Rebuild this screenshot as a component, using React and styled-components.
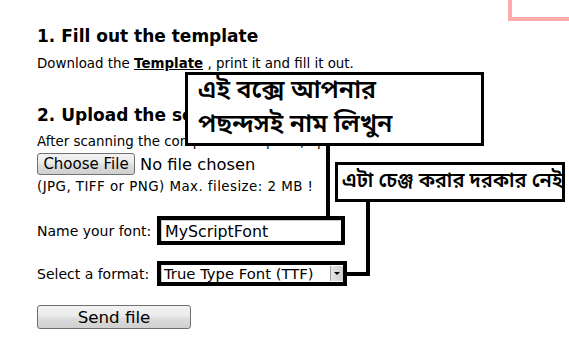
import React from "react";
import styled, { createGlobalStyle } from "styled-components";

const Global = createGlobalStyle`
  html, body { margin: 0; padding: 0; background: #fff; }
  body { font-family: "DejaVu Sans", Verdana, sans-serif; color: #000; }
  * { box-sizing: border-box; }
`;

const Page = styled.div`
  position: relative;
  width: 569px;
  height: 346px;
  overflow: hidden;
  padding: 26px 0 0 37px;
  display: flex;
  flex-direction: column;
  align-items: flex-start;
`;

const Heading = styled.h2`
  margin: ${(p) => p.$top || 0}px 0 0 0;
  font-size: 17px;
  line-height: 20px;
  font-weight: bold;
  white-space: nowrap;
`;

const Text = styled.p`
  margin: ${(p) => p.$top || 0}px 0 0 0;
  font-size: 13.4px;
  line-height: 16px;
  letter-spacing: ${(p) => p.$ls || 0}px;
  white-space: nowrap;
`;

const Link = styled.a`
  font-weight: bold;
  color: #000;
  text-decoration: underline;
`;

const FileRow = styled.div`
  margin-top: 3px;
  display: flex;
  align-items: center;
  gap: 5px;
  height: 22px;
`;

const GreyButton = styled.button`
  font-family: "DejaVu Sans", Verdana, sans-serif;
  color: #000;
  border: 1px solid #707070;
  border-radius: 3px;
  background: linear-gradient(#f2f2f2, #ebebeb 45%, #dddddd 55%, #cfcfcf);
  padding: 0;
  margin-top: ${(p) => p.$top || 0}px;
  width: ${(p) => p.$w}px;
  height: ${(p) => p.$h}px;
  font-size: ${(p) => p.$fs}px;
  line-height: 1;
`;

const FileStatus = styled.span`
  font-size: 16.3px;
`;

const FieldRow = styled.div`
  margin-top: ${(p) => p.$top}px;
  display: grid;
  grid-template-columns: 120px auto;
  align-items: center;
`;

const Label = styled.span`
  font-size: 14px;
`;

const Marked = styled.div`
  border: 4px solid #000;
  width: ${(p) => p.$w}px;
  height: ${(p) => p.$h}px;
  background: #fff;
  display: flex;
`;

const TextInput = styled.input`
  flex: 1;
  min-width: 0;
  border: 1px solid #c8c8c8;
  border-right: none;
  border-bottom: none;
  padding: 0 0 0 3px;
  font-family: "DejaVu Sans", Verdana, sans-serif;
  font-size: 15.8px;
  color: #000;
  outline: none;
  background: #fff;
`;

const SelectBox = styled.div`
  flex: 1;
  display: flex;
  align-items: center;
  border-left: 1px solid #c8c8c8;
  font-size: 14.8px;
  padding-left: 2px;
`;

const SelectText = styled.span`
  flex: 1;
  white-space: nowrap;
`;

const Arrow = styled.span`
  width: 13px;
  align-self: stretch;
  margin: 1px 0;
  background: linear-gradient(90deg, #e4e4e4, #cfcfcf);
  border-left: 1px solid #a0a0a0;
  display: flex;
  align-items: center;
  justify-content: center;
  &::after {
    content: "";
    border-left: 3px solid transparent;
    border-right: 3px solid transparent;
    border-top: 3px solid #000;
  }
`;

const Callout = styled.div`
  position: absolute;
  left: ${(p) => p.$x}px;
  top: ${(p) => p.$y}px;
  width: ${(p) => p.$w}px;
  height: ${(p) => p.$h}px;
  border: 3px solid #000;
  background: #fff;
  font-family: "Noto Sans Bengali", "Lohit Bengali", "Vrinda", "FreeSans", sans-serif;
  font-weight: 600;
  font-size: ${(p) => p.$fs}px;
  line-height: ${(p) => p.$lh}px;
  padding: ${(p) => p.$pad};
  white-space: nowrap;
`;

const Wire = styled.div`
  position: absolute;
  left: ${(p) => p.$x}px;
  top: ${(p) => p.$y}px;
  width: ${(p) => p.$w}px;
  height: ${(p) => p.$h}px;
  background: #000;
`;

const PinkFrame = styled.div`
  position: absolute;
  left: 508px;
  top: -20px;
  width: 100px;
  height: 41px;
  border-left: 4px solid #ffaaaa;
  border-bottom: 4px solid #ffaaaa;
`;

export default function App() {
  return (
    <>
      <Global />
      <Page>
        <Heading>1. Fill out the template</Heading>
        <Text $top={10}>
          Download the <Link href="#">Template</Link> , print it and fill it out.
        </Text>
        <Heading $top={33}>2. Upload the scanned template</Heading>
        <Text $top={9}>After scanning the completed template, upload it here:</Text>
        <FileRow>
          <GreyButton $w={98} $h={22} $fs={15}>Choose File</GreyButton>
          <FileStatus>No file chosen</FileStatus>
        </FileRow>
        <Text $top={4} $ls={0.45}>(JPG, TIFF or PNG) Max. filesize: 2 MB !</Text>
        <FieldRow $top={21}>
          <Label>Name your font:</Label>
          <Marked $w={188} $h={29}>
            <TextInput readOnly value="MyScriptFont" />
          </Marked>
        </FieldRow>
        <FieldRow $top={16}>
          <Label>Select a format:</Label>
          <Marked $w={190} $h={25}>
            <SelectBox>
              <SelectText>True Type Font (TTF)</SelectText>
              <Arrow />
            </SelectBox>
          </Marked>
        </FieldRow>
        <GreyButton $top={19} $w={154} $h={24} $fs={16.7}>Send file</GreyButton>

        <PinkFrame />
        <Callout $x={185} $y={72} $w={299} $h={74} $fs={25} $lh={34} $pad="0 0 0 10px">
          এই বক্সে আপনার
          <br />
          পছন্দসই নাম লিখুন
        </Callout>
        <Wire $x={326} $y={145} $w={4} $h={73} />
        <Callout $x={335} $y={162} $w={230} $h={40} $fs={20} $lh={34} $pad="0 0 0 4px">
          এটা চেঞ্জ করার দরকার নেই
        </Callout>
        <Wire $x={366} $y={200} $w={4} $h={76} />
        <Wire $x={346} $y={272} $w={24} $h={4} />
      </Page>
    </>
  );
}
